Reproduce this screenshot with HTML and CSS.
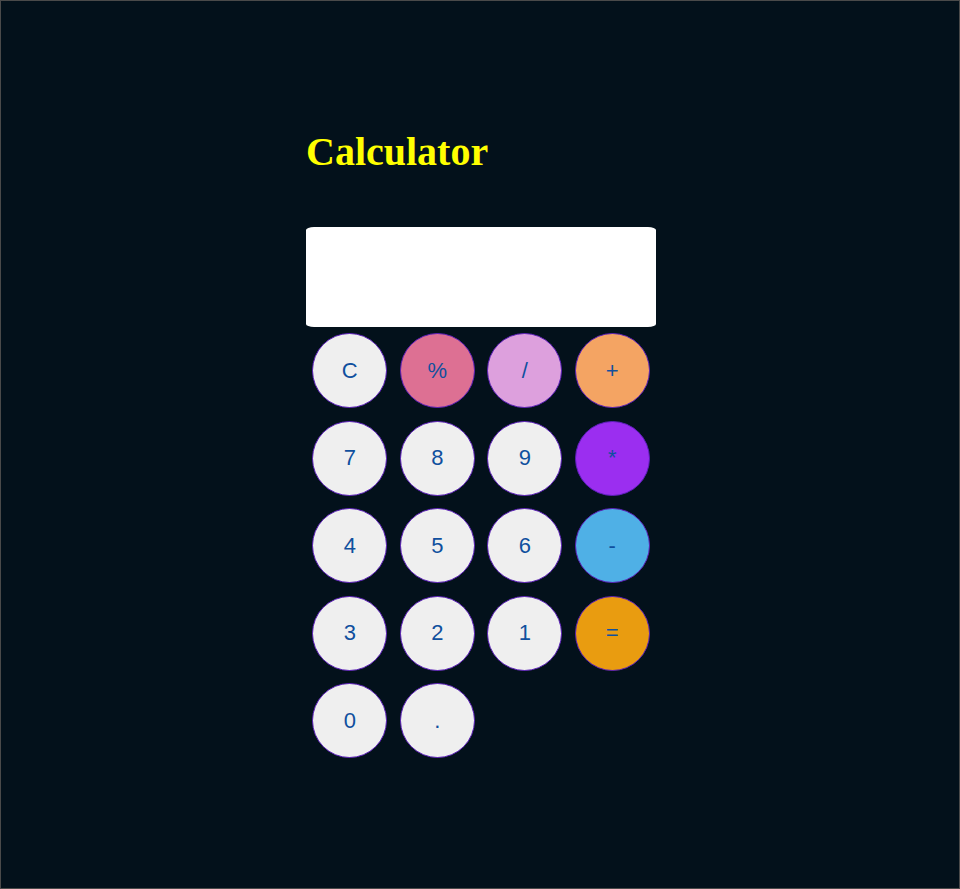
FILE: index.html
```html
<!DOCTYPE html>
<html>
<head>
<meta charset="utf-8">
<title>Calculator</title>
<link rel="stylesheet" href="styles.css">
</head>
<body>
<div class="frame">
  <div class="calc">
    <h1 class="title">Calculator</h1>
    <div class="display"></div>
    <div class="keys">
      <div class="cell"><button class="key">C</button></div>
      <div class="cell"><button class="key key-pct">%</button></div>
      <div class="cell"><button class="key key-div">/</button></div>
      <div class="cell"><button class="key key-add">+</button></div>
      <div class="cell"><button class="key">7</button></div>
      <div class="cell"><button class="key">8</button></div>
      <div class="cell"><button class="key">9</button></div>
      <div class="cell"><button class="key key-mul">*</button></div>
      <div class="cell"><button class="key">4</button></div>
      <div class="cell"><button class="key">5</button></div>
      <div class="cell"><button class="key">6</button></div>
      <div class="cell"><button class="key key-sub">-</button></div>
      <div class="cell"><button class="key">3</button></div>
      <div class="cell"><button class="key">2</button></div>
      <div class="cell"><button class="key">1</button></div>
      <div class="cell"><button class="key key-eq">=</button></div>
      <div class="cell"><button class="key">0</button></div>
      <div class="cell"><button class="key">.</button></div>
    </div>
  </div>
</div>
</body>
</html>
```
FILE: styles.css
```css
html, body {
  margin: 0;
  padding: 0;
  background: #03111b;
}
.frame {
  box-sizing: border-box;
  width: 960px;
  height: 889px;
  border: 1px solid #4a4a4a;
  background: #03111b;
}
.calc {
  width: 350px;
  margin-left: 305px;
  padding-top: 128px;
}
.title {
  margin: 0;
  font-family: "Liberation Serif", serif;
  font-weight: bold;
  font-size: 40px;
  line-height: 46px;
  color: #ffff00;
}
.display {
  margin-top: 52px;
  height: 100px;
  background: #ffffff;
  border-radius: 8px / 3px;
}
.keys {
  display: grid;
  grid-template-columns: repeat(4, 87.5px);
  grid-auto-rows: 87.5px;
}
.cell {
  display: flex;
  align-items: center;
  justify-content: center;
}
.key {
  box-sizing: border-box;
  width: 75px;
  height: 75px;
  padding: 0;
  border: 1px solid #5b1fb8;
  border-radius: 50%;
  background: #efefef;
  color: #10509e;
  font-family: "Liberation Sans", Arial, sans-serif;
  font-size: 22px;
}
.key-pct { background: #dd7093; }
.key-div { background: #dda0dd; }
.key-add { background: #f4a463; }
.key-mul { background: #9b2ef0; }
.key-sub { background: #4fb0e6; }
.key-eq { background: #e99c10; }
```
